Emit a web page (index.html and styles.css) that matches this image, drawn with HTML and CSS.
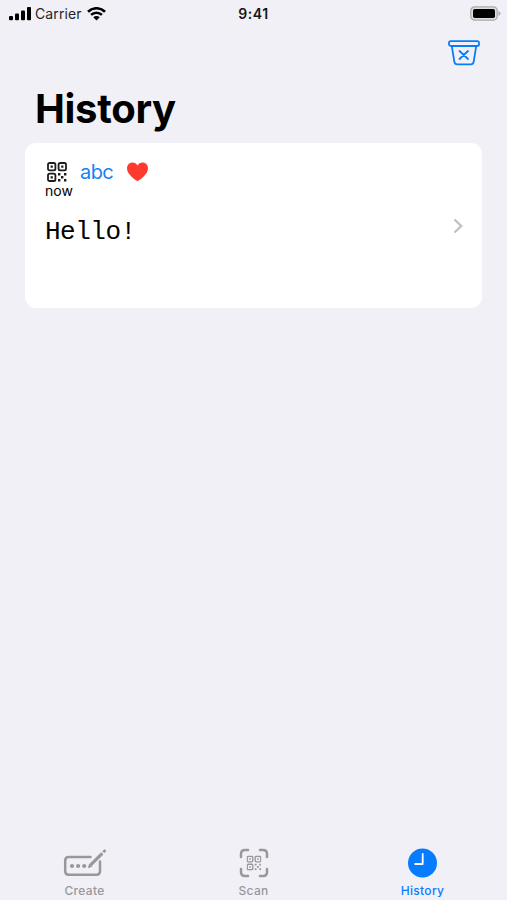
FILE: index.html
```html
<!DOCTYPE html>
<html lang="en">
<head>
  <meta charset="UTF-8" />
  <meta name="viewport" content="width=device-width, initial-scale=1.0" />
  <title>History</title>
  <link rel="stylesheet" href="styles.css">
</head>
<body>
  <svg class="defs" width="0" height="0">
    <symbol id="qr" viewBox="0 0 20 20">
      <g fill="none" stroke="currentColor" stroke-width="1.8">
        <rect x="1" y="1" width="7.4" height="7.4" rx="1.6" />
        <rect x="11.6" y="1" width="7.4" height="7.4" rx="1.6" />
        <rect x="1" y="11.6" width="7.4" height="7.4" rx="1.6" />
      </g>
      <path fill="currentColor" d="M3.6 3.6h2.2v2.2H3.6zM14.2 3.6h2.2v2.2h-2.2zM3.6 14.2h2.2v2.2H3.6zM11 11h2.4v2.4H11zM17 11h2.4v2.4H17zM14 14h2.4v2.4H14zM11 17h2.4v2.4H11zM17 17h2.4v2.4H17z" />
    </symbol>
  </svg>
  <div class="screen">
    <header class="status">
      <div class="status-left">
        <svg class="signal" width="22" height="14" viewBox="0 0 22 14">
          <rect x="0" y="9" width="4" height="4.2" rx="1" />
          <rect x="6" y="6.5" width="4" height="6.7" rx="1" />
          <rect x="12" y="3.5" width="4" height="9.7" rx="1" />
          <rect x="18" y="0" width="4" height="13.2" rx="1" />
        </svg>
        <span class="carrier">Carrier</span>
        <svg class="wifi" width="19" height="14" viewBox="0 0 19 14">
          <g fill="none" stroke="#000" stroke-width="2.6">
            <path d="M1 4.7a12.2 12.2 0 0 1 17 0" />
            <path d="M4.1 7.9a7.8 7.8 0 0 1 10.8 0" />
          </g>
          <path d="M6.3 10.3a4.6 4.6 0 0 1 6.4 0L9.5 13.5z" />
        </svg>
      </div>
      <span class="time">9:41</span>
      <svg class="battery" width="31" height="15" viewBox="0 0 31 15">
        <rect x="0.8" y="0.8" width="26.4" height="13.4" rx="4" fill="#dededf" stroke="#aaaaac" stroke-width="1.3" />
        <rect x="3" y="3" width="22" height="9" rx="1.8" />
        <path d="M28.5 5v5q2-.8 2-2.5t-2-2.5" fill="#aaaaac" />
      </svg>
    </header>
    <nav class="toolbar">
      <svg width="32" height="26" viewBox="0 0 32 26" fill="none" stroke="#087df8" stroke-width="1.8" stroke-linecap="round" stroke-linejoin="round">
        <rect x="1" y="1.2" width="30" height="4.8" rx="1.8" />
        <path d="M3.8 6.2l2.5 15.4q.4 2.800 3 2.800h13.400q2.600 0 3-2.800l2.500-15.400M11.500 11l8.500 8M20 11l-8.500 8" />
      </svg>
    </nav>
    <h1>History</h1>
    <main class="card">
      <div class="entry">
        <div class="tags">
          <svg class="qr" width="20" height="20"><use href="#qr" /></svg>
          <span class="abc">abc</span>
          <svg class="heart" width="21" height="20" viewBox="0 0 21 20">
            <path d="M10.5 19.3C7 17 0 12 0 6.2 0 2.6 2.5.4 5.4.4c2.2 0 4.1 1.1 5.1 3.2C11.5 1.5 13.4.4 15.6.4 18.5.4 21 2.6 21 6.2 21 12 14 17 10.5 19.3z" />
          </svg>
        </div>
        <div class="when">now</div>
        <div class="message">Hello!</div>
      </div>
      <svg class="chevron" width="10" height="16" viewBox="0 0 10 16">
        <path d="M1.5 1.5L8.2 8l-6.700 6.500" />
      </svg>
    </main>
    <footer class="tabs">
      <div class="tab">
        <svg width="44" height="30" viewBox="0 0 44 30" fill="none" stroke="currentColor">
          <path d="M27.5 9H5.700Q2.200 9 2.200 12.500v10.800q0 3.500 3.500 3.500h27.800q3.500 0 3.500-3.500V13.500" stroke-width="2.500" stroke-linecap="round" />
          <path d="M27.500 17.200L39.300 5.400" stroke-width="3.200" />
          <path d="M25.300 19.700l1.200-3.700 2.400 2.400zM39.700 3.200l1.200-1.200q.8-.6 1.500.1t.1 1.500L41.300 4.800z" fill="currentColor" stroke-width=".8" />
          <g fill="currentColor" stroke="none">
            <circle cx="9" cy="18" r="2.100" />
            <circle cx="15.100" cy="18" r="2.100" />
            <circle cx="21.200" cy="18" r="2.100" />
          </g>
        </svg>
        <span>Create</span>
      </div>
      <div class="tab">
        <svg width="30" height="30" viewBox="0 0 30 30">
          <path d="M2 9V6q0-4 4-4h3M21 2h3q4 0 4 4v3M28 21v3q0 4-4 4h-3M9 28H6q-4 0-4-4v-3" fill="none" stroke="currentColor" stroke-width="2.500" stroke-linecap="round" />
          <use href="#qr" x="7.500" y="7.500" width="15" height="15" />
        </svg>
        <span>Scan</span>
      </div>
      <div class="tab active">
        <svg width="30" height="30" viewBox="0 0 30 30">
          <circle cx="14.500" cy="15" r="14.500" fill="currentColor" />
          <path d="M14.700 6v10H7.200" fill="none" stroke="#fff" stroke-width="1.800" stroke-linecap="round" stroke-linejoin="round" />
        </svg>
        <span>History</span>
      </div>
    </footer>
  </div>
</body>
</html>
```
FILE: styles.css
```css
body {
  margin: 0;
  background: #f1f0f6;
  color: #000;
  font-family: Inter, "Liberation Sans", sans-serif;
}
.defs {
  display: block;
}
.screen {
  display: flex;
  flex-direction: column;
  height: 900px;
  overflow: hidden;
}
.status {
  display: grid;
  grid-template-columns: 1fr auto 1fr;
  align-items: center;
  height: 27px;
  padding: 0 6px 0 9px;
}
.status-left {
  display: flex;
  align-items: center;
}
.carrier {
  margin: 0 5px 0 4px;
  font-size: 14px;
  letter-spacing: 0.1px;
  color: #252528;
}
.time {
  padding-right: 3px;
  font-size: 14px;
  font-weight: 600;
  letter-spacing: 0.6px;
  color: #161618;
}
.battery {
  justify-self: end;
}
.toolbar {
  display: flex;
  justify-content: flex-end;
  padding: 13px 27px 0 0;
  height: 47px;
  box-sizing: border-box;
}
h1 {
  margin: 10px 0 0 35px;
  font-size: 40px;
  line-height: 50px;
  font-weight: 700;
  letter-spacing: -0.3px;
}
.card {
  display: flex;
  justify-content: space-between;
  align-items: center;
  box-sizing: border-box;
  height: 165px;
  margin: 9px 25px 0;
  padding: 0 19px 0 20px;
  background: #fff;
  border-radius: 11px;
}
.entry {
  align-self: flex-start;
  padding-top: 18px;
}
.tags {
  display: flex;
  align-items: center;
  height: 21px;
}
.qr {
  margin-left: 2px;
  color: #1c1c1c;
}
.abc {
  margin: 0 14px 0 13px;
  font-size: 20px;
  letter-spacing: -0.6px;
  color: #1683f5;
}
.heart {
  fill: #ff3b30;
}
.when {
  font-size: 14px;
  line-height: 17px;
}
.message {
  margin-top: 18px;
  font-family: "Liberation Mono", monospace;
  font-size: 26px;
  line-height: 30px;
  letter-spacing: -0.5px;
}
.chevron {
  fill: none;
  stroke: #c1c1c3;
  stroke-width: 2.4;
}
.tabs {
  display: grid;
  grid-template-columns: repeat(3, 1fr);
  margin-top: auto;
}
.tab {
  display: flex;
  flex-direction: column;
  align-items: center;
  height: 52px;
  color: #98989c;
  font-size: 12px;
  line-height: 15px;
  font-weight: 500;
  letter-spacing: 0.3px;
}
.tab span {
  margin-top: 5px;
}
.active {
  color: #087cff;
}
```
